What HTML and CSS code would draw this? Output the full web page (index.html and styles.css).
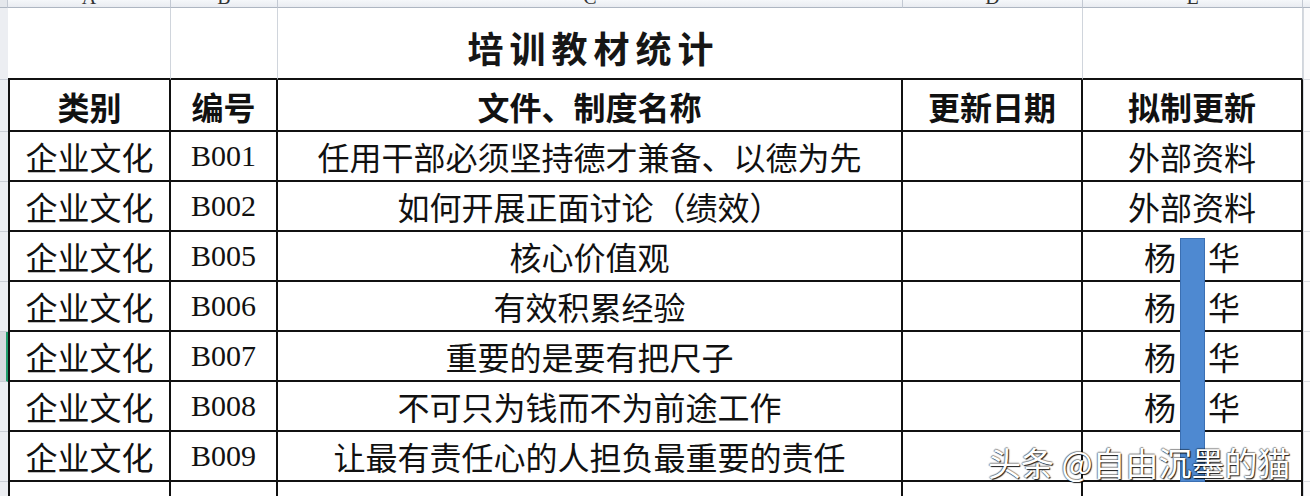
FILE: index.html
```html
<!DOCTYPE html>
<html lang="zh-CN">
<head>
<meta charset="utf-8">
<title>培训教材统计</title>
<link rel="stylesheet" href="styles.css">
</head>
<body>
<div class="sheet">
  <!-- column header strip -->
  <div class="ch corner"></div>
  <div class="ch"><span>A</span></div>
  <div class="ch"><span>B</span></div>
  <div class="ch"><span>C</span></div>
  <div class="ch"><span>D</span></div>
  <div class="ch"><span>E</span></div>
  <div class="ch edge"></div>

  <!-- title row -->
  <div class="rh"></div>
  <div class="tc"></div>
  <div class="tc"></div>
  <div class="tc title">培训教材统计</div>
  <div class="tc"></div>
  <div class="tc"></div>
  <div class="rc"></div>

  <!-- header row -->
  <div class="rh"></div>
  <div class="cell head first">类别</div>
  <div class="cell head">编号</div>
  <div class="cell head">文件、制度名称</div>
  <div class="cell head">更新日期</div>
  <div class="cell head">拟制更新</div>
  <div class="rc"></div>

  <div class="rh"></div>
  <div class="cell first">企业文化</div>
  <div class="cell code">B001</div>
  <div class="cell">任用干部必须坚持德才兼备、以德为先</div>
  <div class="cell"></div>
  <div class="cell">外部资料</div>
  <div class="rc"></div>

  <div class="rh"></div>
  <div class="cell first">企业文化</div>
  <div class="cell code">B002</div>
  <div class="cell">如何开展正面讨论（绩效）</div>
  <div class="cell"></div>
  <div class="cell">外部资料</div>
  <div class="rc"></div>

  <div class="rh"></div>
  <div class="cell first">企业文化</div>
  <div class="cell code">B005</div>
  <div class="cell">核心价值观</div>
  <div class="cell"></div>
  <div class="cell">杨　华</div>
  <div class="rc"></div>

  <div class="rh"></div>
  <div class="cell first">企业文化</div>
  <div class="cell code">B006</div>
  <div class="cell">有效积累经验</div>
  <div class="cell"></div>
  <div class="cell">杨　华</div>
  <div class="rc"></div>

  <div class="rh active"></div>
  <div class="cell first">企业文化</div>
  <div class="cell code">B007</div>
  <div class="cell">重要的是要有把尺子</div>
  <div class="cell"></div>
  <div class="cell">杨　华</div>
  <div class="rc"></div>

  <div class="rh"></div>
  <div class="cell first">企业文化</div>
  <div class="cell code">B008</div>
  <div class="cell">不可只为钱而不为前途工作</div>
  <div class="cell"></div>
  <div class="cell">杨　华</div>
  <div class="rc"></div>

  <div class="rh"></div>
  <div class="cell first">企业文化</div>
  <div class="cell code">B009</div>
  <div class="cell">让最有责任心的人担负最重要的责任</div>
  <div class="cell"></div>
  <div class="cell"></div>
  <div class="rc"></div>

  <div class="rh last"></div>
  <div class="cell first last"></div>
  <div class="cell last"></div>
  <div class="cell last"></div>
  <div class="cell last"></div>
  <div class="cell last"></div>
  <div class="rc last"></div>
</div>

<div class="bar"></div>
<div class="watermark">头条 @自由沉墨的猫</div>
</body>
</html>
```

FILE: styles.css
```css
* { box-sizing: border-box; }

html, body {
  margin: 0;
  padding: 0;
  background: #ffffff;
  overflow: hidden;
}

body {
  width: 1310px;
  height: 496px;
  position: relative;
  font-family: "Noto Sans CJK SC", "Noto Sans", sans-serif;
  color: #111;
}

.sheet {
  display: grid;
  grid-template-columns: 8px 163px 107px 625px 180px 220px 7px;
  grid-template-rows: 8px 72px 52px repeat(7, 50px) 1fr;
  height: 496px;
}

/* column header strip */
.ch {
  background: linear-gradient(#f5f7fa, #e9ecf1);
  border-right: 1px solid #c3c9d3;
  border-bottom: 1px solid #aeb6c2;
  display: flex;
  justify-content: center;
  align-items: flex-end;
  overflow: hidden;
}
.ch span {
  font-family: "Liberation Serif", serif;
  font-size: 20px;
  line-height: 20px;
  color: #333;
  flex: none;
}
.ch.corner { background: #e4e7ec; }
.ch.edge { border-right: none; }

/* row headers */
.rh {
  background: #eceef2;
  border-bottom: 1px solid #c9ced6;
}
.rh.active {
  background: #d6d9de;
  border-right: 2px solid #1f9d6b;
}

/* right edge column */
.rc {
  background: #fbfbfc;
  border-left: 1px solid #d5d9df;
  border-bottom: 1px solid #dadde2;
}

/* title row */
.tc {
  border-right: 1px solid #d0d5dc;
  border-bottom: 2px solid #111;
}
.tc:first-of-type { border-left: 1px solid #d0d5dc; }

.title {
  display: flex;
  justify-content: center;
  align-items: center;
  padding-top: 8px;
  padding-left: 6px;
  font-size: 36px;
  font-weight: 700;
  letter-spacing: 6px;
  border-right: none;
  color: #161616;
}

/* table cells */
.cell {
  border-right: 2px solid #111;
  border-bottom: 2px solid #111;
  display: flex;
  justify-content: center;
  align-items: center;
  font-size: 32px;
  line-height: 1;
  white-space: nowrap;
  padding-bottom: 1px;
}
.cell.first { border-left: 2px solid #111; }

.cell.head {
  font-weight: 700;
  padding-top: 2px;
}

.cell.code {
  font-family: "Liberation Serif", serif;
  font-size: 30px;
}

.cell.last,
.rh.last,
.rc.last { border-bottom: none; }

/* overlay: blue bar covering part of the sheet */
.bar {
  position: absolute;
  left: 1180px;
  top: 238px;
  width: 25px;
  height: 244px;
  background: #4e89d1;
  border: 1px solid #3b6fb2;
}

/* overlay: watermark */
.watermark {
  position: absolute;
  left: 988px;
  top: 440px;
  font-size: 33px;
  line-height: 44px;
  color: #ffffff;
  white-space: nowrap;
  text-shadow: 1px 1px 1px rgba(0,0,0,0.9), -1px 0 1px rgba(0,0,0,0.4), 0 -1px 1px rgba(0,0,0,0.4);
}
```
